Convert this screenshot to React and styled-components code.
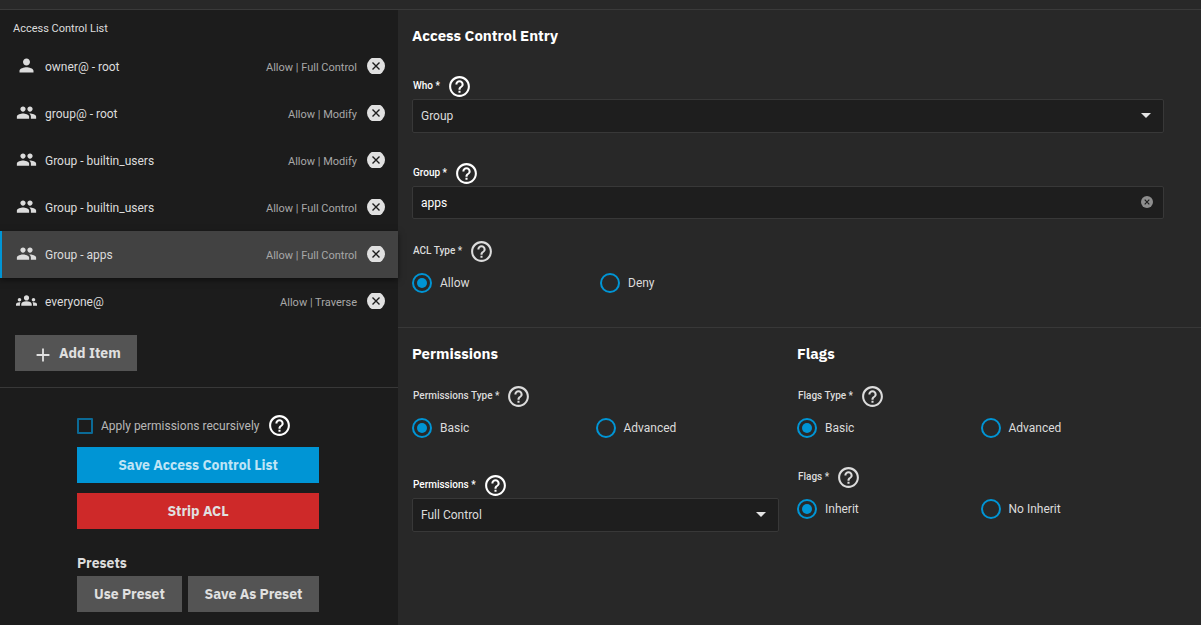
import React, { useState } from "react";
import styled, { createGlobalStyle, css } from "styled-components";
import { MdPerson, MdPeople, MdGroups, MdHelpOutline, MdAdd } from "react-icons/md";

const GlobalStyle = createGlobalStyle`
  *, *::before, *::after { box-sizing: border-box; }
  body {
    margin: 0;
    background: #282828;
    color: #dcdcdc;
    font: 400 12px/20px Roboto, "Liberation Sans", sans-serif;
  }
  button, input, select { font: inherit; color: inherit; margin: 0; }
`;

const headingFont = css`
  font-family: "IBM Plex Sans", "Noto Sans", "Open Sans", sans-serif;
  font-weight: 700;
`;

const Page = styled.div`
  display: flex;
  flex-direction: column;
  min-height: 100vh;
`;

const TopEdge = styled.div`
  height: 10px;
  border-bottom: 1px solid #3a3a3a;
`;

const Columns = styled.div`
  flex: 1;
  display: grid;
  grid-template-columns: minmax(0, 398fr) minmax(0, 803fr);
`;

const Sidebar = styled.aside`
  background: #1c1c1c;
`;

const SidebarTitle = styled.h2`
  margin: 0;
  padding: 9px 13px 4px;
  font-size: 11px;
  font-weight: 400;
  line-height: 20px;
`;

const AceList = styled.ul`
  list-style: none;
  margin: 0;
  padding: 0;
`;

const AceRow = styled.li`
  display: flex;
  align-items: center;
  height: 47px;
  padding: 0 13px 0 14px;
  border-left: 2px solid ${(p) => (p.$selected ? "#0095d5" : "transparent")};
  background: ${(p) => (p.$selected ? "#424242" : "transparent")};
  box-shadow: ${(p) => (p.$selected ? "0 2px 6px rgba(0, 0, 0, 0.5)" : "none")};
`;

const AceIcon = styled.span`
  display: flex;
  margin-right: 8px;
  padding-bottom: 2px;
`;

const AceName = styled.span`
  flex: 1;
`;

const AcePermission = styled.span`
  margin-right: 10px;
  padding-top: 2px;
  font-size: 11px;
  color: #a8a8a8;
`;

const PlainButton = styled.button`
  display: flex;
  padding: 0;
  border: 0;
  background: none;
  cursor: pointer;
`;

const Button = styled.button`
  ${headingFont}
  display: flex;
  align-items: center;
  justify-content: center;
  height: 36px;
  padding: 0 16px;
  border: 0;
  font-size: 14px;
  white-space: nowrap;
  background: ${(p) => p.$background || "#545454"};
  color: ${(p) => p.$color || "#e0e0e0"};
  cursor: pointer;
`;

const AddArea = styled.div`
  display: flex;
  padding: 10px 15px 16px;
  border-bottom: 1px solid #383838;

  svg { margin: 4px 5px 0 1px; }
`;

const Actions = styled.div`
  width: 244px;
  margin: 0 auto;
  padding: 25px 2px 13px 0;
  display: flex;
  flex-direction: column;
`;

const CheckRow = styled.div`
  display: flex;
  align-items: center;
  height: 25px;
  margin-bottom: 9px;
  color: #ffffff;

  label { margin: 0 7px 0 8px; color: #b8b8b8; }
`;

const Checkbox = styled.input`
  appearance: none;
  width: 16px;
  height: 16px;
  border: 2px solid #0b6a96;
  border-radius: 1px;

  &:checked { background: #0095d5; }
`;

const StripSpacer = styled.div`
  margin: 10px 0 24px;
  display: grid;
`;

const PresetsTitle = styled.h3`
  ${headingFont}
  margin: 0 0 3px;
  font-size: 14px;
  line-height: 20px;
`;

const PresetButtons = styled.div`
  display: grid;
  grid-template-columns: 4fr 5fr;
  gap: 6px;

  button { padding: 0; }
`;

const Editor = styled.main`
  min-width: 0;
`;

const Section = styled.section`
  padding: 16px 37px 34px 14px;
`;

const SplitSection = styled.div`
  display: grid;
  grid-template-columns: 1fr 1fr;
  gap: 18px;
  padding: 16px 37px 34px 14px;
  border-top: 1px solid #383838;
`;

const Heading = styled.h3`
  ${headingFont}
  margin: 0;
  font-size: 15px;
  line-height: 20px;
  color: #ffffff;
`;

const Field = styled.div`
  margin-top: ${(p) => p.$top}px;
`;

const LabelRow = styled.div`
  display: flex;
  align-items: center;
  gap: 7px;
  height: 24px;
  margin-bottom: 1px;
  padding-left: 1px;
  font-size: 10px;
  font-weight: 500;
  color: ${(p) => (p.$bright ? "#ffffff" : "#dcdcdc")};
`;

const Control = styled.div`
  position: relative;
`;

const boxed = css`
  display: block;
  width: 100%;
  padding: 0 8px;
  background: #1e1e1e;
  border: 1px solid #383838;
  border-radius: 2px;
  outline: none;
`;

const Select = styled.select`
  ${boxed}
  appearance: none;
  height: 34px;
`;

const TextInput = styled.input`
  ${boxed}
  height: 33px;
  color: #ffffff;
`;

const Arrow = styled.svg`
  position: absolute;
  right: 13px;
  top: 14px;
  pointer-events: none;
`;

const ClearButton = styled(PlainButton)`
  position: absolute;
  right: 11px;
  top: 10px;
`;

const RadioRow = styled.div`
  display: grid;
  grid-template-columns: repeat(${(p) => p.$columns}, 1fr);
  margin-top: 10px;
`;

const RadioLabel = styled.label`
  display: flex;
  align-items: center;
  gap: 8px;
  height: 20px;
`;

const Radio = styled.input`
  appearance: none;
  display: grid;
  place-items: center;
  width: 20px;
  height: 20px;
  border: 2px solid #0095d5;
  border-radius: 50%;

  &:checked::before {
    content: "";
    width: 10px;
    height: 10px;
    border-radius: 50%;
    background: #0095d5;
  }
`;

function Help({ about }) {
  return (
    <PlainButton type="button" aria-label={`Help for ${about}`}>
      <MdHelpOutline size={25} />
    </PlainButton>
  );
}

function RemoveIcon() {
  return (
    <svg width="18" height="17" viewBox="0 0 18 17" aria-hidden="true">
      <clipPath id="remove-icon-edge">
        <rect width="18" height="16" />
      </clipPath>
      <circle cx="9" cy="8" r="9" fill="#e0e0e0" clipPath="url(#remove-icon-edge)" />
      <path d="M5.5 4.5l7 7M12.5 4.5l-7 7" stroke="#1c1c1c" strokeWidth="1.4" />
    </svg>
  );
}

function SelectField({ id, label, value, top }) {
  return (
    <Field $top={top}>
      <LabelRow $bright>
        <label htmlFor={id}>{label} *</label>
        <Help about={label} />
      </LabelRow>
      <Control>
        <Select id={id} defaultValue={value}>
          <option>{value}</option>
        </Select>
        <Arrow width="10" height="5" viewBox="0 0 10 5" aria-hidden="true">
          <path d="M0 0h10L5 5z" fill="#e4e4e4" />
        </Arrow>
      </Control>
    </Field>
  );
}

function RadioField({ name, label, options, top, columns = 2 }) {
  const [value, setValue] = useState(options[0]);
  return (
    <Field $top={top} role="radiogroup" aria-labelledby={`${name}-label`}>
      <LabelRow>
        <span id={`${name}-label`}>{label} *</span>
        <Help about={label} />
      </LabelRow>
      <RadioRow $columns={columns}>
        {options.map((option) => (
          <RadioLabel key={option}>
            <Radio
              type="radio"
              name={name}
              checked={value === option}
              onChange={() => setValue(option)}
            />
            {option}
          </RadioLabel>
        ))}
      </RadioRow>
    </Field>
  );
}

const entries = [
  { icon: MdPerson, name: "owner@ - root", permission: "Allow | Full Control" },
  { icon: MdPeople, name: "group@ - root", permission: "Allow | Modify" },
  { icon: MdPeople, name: "Group - builtin_users", permission: "Allow | Modify" },
  { icon: MdPeople, name: "Group - builtin_users", permission: "Allow | Full Control" },
  { icon: MdPeople, name: "Group - apps", permission: "Allow | Full Control", selected: true },
  { icon: MdGroups, name: "everyone@", permission: "Allow | Traverse" },
];

export default function App() {
  return (
    <Page>
      <GlobalStyle />
      <TopEdge />
      <Columns>
        <Sidebar>
          <SidebarTitle>Access Control List</SidebarTitle>
          <AceList>
            {entries.map(({ icon: Icon, name, permission, selected }, i) => (
              <AceRow key={i} $selected={selected}>
                <AceIcon><Icon size={21} /></AceIcon>
                <AceName>{name}</AceName>
                <AcePermission>{permission}</AcePermission>
                <PlainButton type="button" aria-label={`Remove ${name}`}>
                  <RemoveIcon />
                </PlainButton>
              </AceRow>
            ))}
          </AceList>
          <AddArea>
            <Button type="button">
              <MdAdd size={22} />
              Add Item
            </Button>
          </AddArea>
          <Actions>
            <CheckRow>
              <Checkbox type="checkbox" id="recursive" />
              <label htmlFor="recursive">Apply permissions recursively</label>
              <Help about="Apply permissions recursively" />
            </CheckRow>
            <Button type="button" $background="#0095d5" $color="#bfe4f5">
              Save Access Control List
            </Button>
            <StripSpacer>
              <Button type="button" $background="#ce2929">Strip ACL</Button>
            </StripSpacer>
            <PresetsTitle>Presets</PresetsTitle>
            <PresetButtons>
              <Button type="button">Use Preset</Button>
              <Button type="button">Save As Preset</Button>
            </PresetButtons>
          </Actions>
        </Sidebar>
        <Editor>
          <Section>
            <Heading>Access Control Entry</Heading>
            <SelectField id="who" label="Who" value="Group" top={28} />
            <Field $top={28}>
              <LabelRow $bright>
                <label htmlFor="group">Group *</label>
                <Help about="Group" />
              </LabelRow>
              <Control>
                <TextInput id="group" type="text" defaultValue="apps" />
                <ClearButton type="button" aria-label="Clear group">
                  <svg width="12" height="12" viewBox="0 0 12 12" aria-hidden="true">
                    <circle cx="6" cy="6" r="6" fill="#8e8e8e" />
                    <path d="M3.7 3.7l4.6 4.6M8.3 3.7l-4.6 4.6" stroke="#1e1e1e" strokeWidth="1.2" />
                  </svg>
                </ClearButton>
              </Control>
            </Field>
            <RadioField name="acl-type" label="ACL Type" options={["Allow", "Deny"]} top={20} columns={4} />
          </Section>
          <SplitSection>
            <div>
              <Heading>Permissions</Heading>
              <RadioField name="permissions-type" label="Permissions Type" options={["Basic", "Advanced"]} top={20} />
              <SelectField id="permissions" label="Permissions" value="Full Control" top={35} />
            </div>
            <div>
              <Heading>Flags</Heading>
              <RadioField name="flags-type" label="Flags Type" options={["Basic", "Advanced"]} top={20} />
              <RadioField name="flags" label="Flags" options={["Inherit", "No Inherit"]} top={27} />
            </div>
          </SplitSection>
        </Editor>
      </Columns>
    </Page>
  );
}
